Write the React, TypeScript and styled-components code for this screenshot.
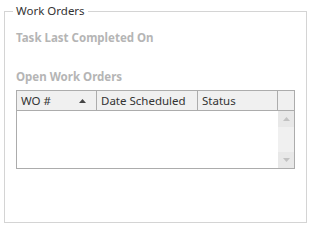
import React from 'react';
import styled, { createGlobalStyle } from 'styled-components';

const GlobalStyle = createGlobalStyle`
  html, body {
    margin: 0;
    padding: 0;
    background: #ffffff;
  }
  body {
    font-family: 'Noto Sans', 'Open Sans', sans-serif;
    font-size: 11.5px;
  }
`;

const columns = [
  { title: 'WO #', width: 80, sorted: true },
  { title: 'Date Scheduled', width: 101, sorted: false },
  { title: 'Status', width: 80, sorted: false },
];

function SortArrow() {
  return (
    <svg width="7" height="4" viewBox="0 0 7 4">
      <path d="M0 4 L3.5 0 L7 4 Z" fill="#444" />
    </svg>
  );
}

function ScrollArrow({ down }: { down?: boolean }) {
  return (
    <svg width="7" height="4" viewBox="0 0 7 4">
      <path d={down ? 'M0 0 L3.5 4 L7 0 Z' : 'M0 4 L3.5 0 L7 4 Z'} fill="#c2c2c2" />
    </svg>
  );
}

function App() {
  return (
    <>
      <GlobalStyle />
      <Page>
        <Group>
          <Legend>Work Orders</Legend>
          <Label>Task Last Completed On</Label>
          <Label className="open">Open Work Orders</Label>
          <Grid>
            <HeaderRow>
              {columns.map((c) => (
                <HeaderCell key={c.title} $width={c.width}>
                  <span>{c.title}</span>
                  {c.sorted && <SortArrow />}
                </HeaderCell>
              ))}
              <HeaderFiller />
            </HeaderRow>
            <Body>
              <Rows />
              <ScrollBar>
                <ScrollButton>
                  <ScrollArrow />
                </ScrollButton>
                <ScrollButton>
                  <ScrollArrow down />
                </ScrollButton>
              </ScrollBar>
            </Body>
          </Grid>
        </Group>
      </Page>
    </>
  );
}

const Page = styled.div`
  padding: 3px 0 0 4px;
  width: 314px;
  height: 229px;
  box-sizing: border-box;
`;

const Group = styled.fieldset`
  margin: 0;
  width: 303px;
  height: 220px;
  box-sizing: border-box;
  border: 1px solid #d4d4d4;
  padding: 0 11px 0 11px;
  display: flex;
  flex-direction: column;
`;

const Legend = styled.legend`
  padding: 0 3px;
  margin-left: -3px;
  font-size: 11.5px;
  line-height: 16px;
  color: #333333;
`;

const Label = styled.div`
  font-weight: 700;
  font-size: 11.5px;
  line-height: 16px;
  color: #b5b5b5;
  margin-top: 11px;
  &.open {
    margin-top: 23px;
  }
`;

const Grid = styled.div`
  margin-top: 5px;
  width: 279px;
  height: 79px;
  box-sizing: border-box;
  border: 1px solid #acacac;
  display: flex;
  flex-direction: column;
  background: #ffffff;
`;

const HeaderRow = styled.div`
  display: flex;
  height: 19px;
  border-bottom: 1px solid #acacac;
  background: #f0f0f0;
`;

const HeaderCell = styled.div<{ $width: number }>`
  width: ${(p) => p.$width}px;
  box-sizing: border-box;
  border-right: 1px solid #acacac;
  display: flex;
  align-items: center;
  justify-content: space-between;
  padding: 0 10px 0 4px;
  color: #333333;
  font-size: 11.5px;
  white-space: nowrap;
`;

const HeaderFiller = styled.div`
  flex: 1;
`;

const Body = styled.div`
  flex: 1;
  display: flex;
`;

const Rows = styled.div`
  flex: 1;
`;

const ScrollBar = styled.div`
  width: 16px;
  background: #f0f0f0;
  display: flex;
  flex-direction: column;
  justify-content: space-between;
`;

const ScrollButton = styled.div`
  height: 16px;
  display: flex;
  align-items: center;
  justify-content: center;
  background: #e8e8e8;
`;

export default App;
